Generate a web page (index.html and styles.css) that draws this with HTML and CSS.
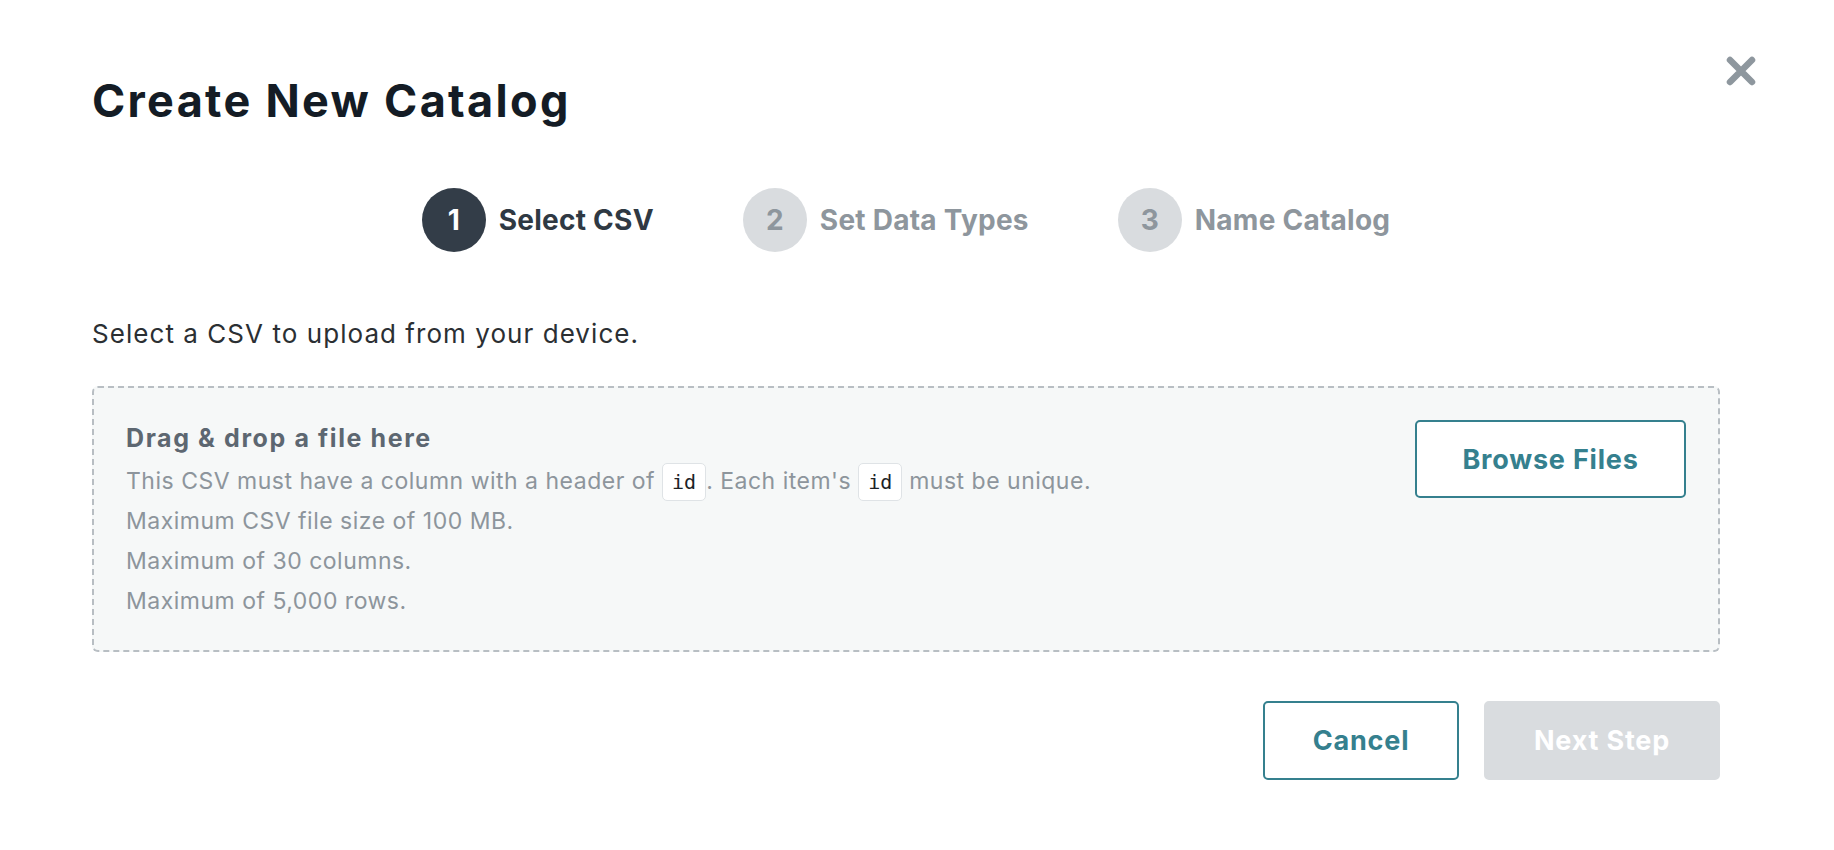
FILE: index.html
```
<!DOCTYPE html>
<html lang="en">
<head>
<meta charset="utf-8">
<title>Create New Catalog</title>
<link rel="stylesheet" href="styles.css">
</head>
<body>
<div class="modal">
  <button class="close" aria-label="Close">
    <svg width="32" height="30" viewBox="0 0 32 30"><path d="M5 4 L27 26 M27 4 L5 26" stroke="#8e979e" stroke-width="6.5" stroke-linecap="round" fill="none"/></svg>
  </button>
  <h1 class="title">Create New Catalog</h1>
  <ol class="steps">
    <li class="step active"><span class="num">1</span><span class="label">Select CSV</span></li>
    <li class="step"><span class="num">2</span><span class="label">Set Data Types</span></li>
    <li class="step"><span class="num">3</span><span class="label">Name Catalog</span></li>
  </ol>
  <p class="desc">Select a CSV to upload from your device.</p>
  <div class="dropzone">
    <div class="dz-text">
      <div class="dz-title">Drag &amp; drop a file here</div>
      <div class="dz-line">This CSV must have a column with a header of <code>id</code>. Each item's <code>id</code> must be unique.</div>
      <div class="dz-line">Maximum CSV file size of 100 MB.</div>
      <div class="dz-line">Maximum of 30 columns.</div>
      <div class="dz-line">Maximum of 5,000 rows.</div>
    </div>
    <button class="btn btn-outline browse">Browse Files</button>
  </div>
  <div class="footer">
    <button class="btn btn-outline cancel">Cancel</button>
    <button class="btn btn-disabled next">Next Step</button>
  </div>
</div>
</body>
</html>
```
FILE: styles.css
```
* { box-sizing: border-box; }
html, body { margin: 0; background: #ffffff; }
body { font-family: Inter, "Noto Sans", sans-serif; color: #2b2f33; }

.modal {
  position: relative;
  padding: 74px 114px 0 92px;
}

.close {
  position: absolute;
  top: 56px;
  right: 77px;
  width: 32px;
  height: 30px;
  padding: 0;
  border: 0;
  background: none;
  display: flex;
}

.title {
  margin: 0;
  font-size: 45px;
  font-weight: 700;
  line-height: 53px;
  color: #141c25;
  letter-spacing: 2.3px;
}

.steps {
  list-style: none;
  margin: 61px 0 0;
  padding: 0;
  display: flex;
  justify-content: center;
  gap: 89px;
}
.step {
  display: flex;
  align-items: center;
  gap: 13px;
}
.num {
  width: 64px;
  height: 64px;
  border-radius: 50%;
  background: #d9dcdf;
  color: #8e969d;
  font-size: 28px;
  font-weight: 700;
  display: flex;
  align-items: center;
  justify-content: center;
}
.label {
  font-size: 28px;
  font-weight: 700;
  color: #8e969d;
  letter-spacing: 0.25px;
}
.step.active .num { background: #333d48; color: #ffffff; }
.step.active .label { color: #2f3943; }

.desc {
  margin: 66px 0 0;
  font-size: 26px;
  line-height: 31px;
  color: #2b2f33;
  letter-spacing: 1.05px;
}

.dropzone {
  margin-top: 37px;
  border: 2px dashed #b8bec3;
  border-radius: 6px;
  background: #f6f8f8;
  padding: 32px;
  display: flex;
  justify-content: space-between;
  align-items: flex-start;
  height: 266px;
}
.dz-title {
  font-size: 25px;
  font-weight: 700;
  line-height: 36px;
  color: #5d6771;
  margin-bottom: 5px;
  letter-spacing: 1.6px;
}
.dz-line {
  font-size: 23px;
  line-height: 40px;
  color: #8d959c;
  letter-spacing: 0.5px;
}
.dz-line code {
  display: inline-block;
  font-family: "DejaVu Sans Mono", "Liberation Mono", monospace;
  font-size: 20px;
  line-height: 36px;
  padding: 0 9px;
  background: #ffffff;
  border: 1px solid #dfe3e6;
  border-radius: 5px;
  color: #1d2226;
  letter-spacing: 0;
}

.btn {
  font-family: Inter, "Noto Sans", sans-serif;
  font-size: 27px;
  font-weight: 700;
  letter-spacing: 0.8px;
  border-radius: 5px;
  display: flex;
  align-items: center;
  justify-content: center;
  cursor: pointer;
}
.btn-outline {
  background: #ffffff;
  border: 2px solid #35808e;
  color: #35808e;
}
.btn-disabled {
  background: #d9dcdf;
  border: 2px solid #d9dcdf;
  color: #ffffff;
}
.browse { width: 271px; height: 78px; }

.footer {
  margin-top: 49px;
  display: flex;
  justify-content: flex-end;
  gap: 25px;
}
.cancel { width: 196px; height: 79px; }
.next { width: 236px; height: 79px; }
```
